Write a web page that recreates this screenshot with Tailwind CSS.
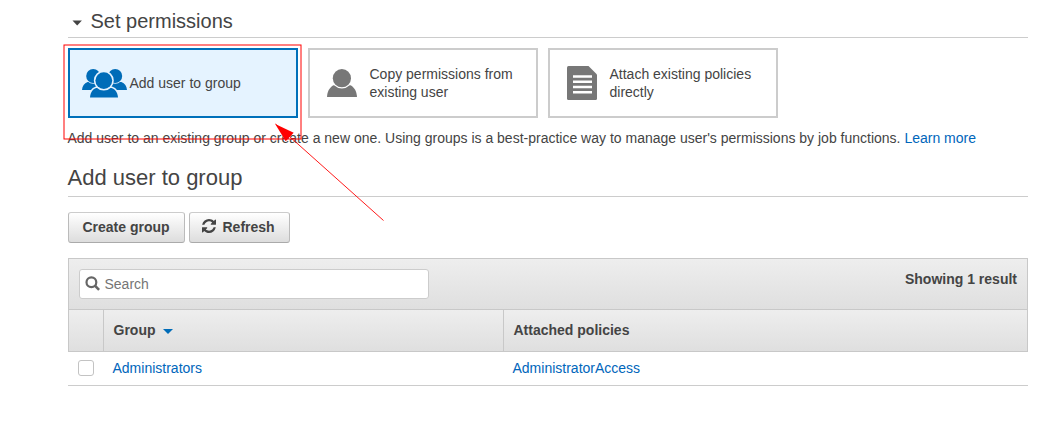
<!DOCTYPE html>
<html lang="en">
<head>
<meta charset="utf-8">
<title>Set permissions</title>
<script src="https://cdn.jsdelivr.net/npm/@tailwindcss/browser@4"></script>
</head>
<body class="bg-white text-[#444] text-[14px] leading-[18px] font-['Liberation_Sans',Arial,sans-serif]">
<main class="relative w-[1061px] h-[437px] overflow-hidden pl-[68px] pr-[33px]">
  <h1 class="flex items-center h-[38px] pt-[5px] pl-1 border-b border-[#ccc] text-[20px] leading-[24px]">
    <svg class="w-[11px] h-[6px] mr-[7.5px] mt-[3px]" viewBox="0 0 11 6" fill="#444"><path d="M.5 .5h9.400L5.200 5.500z"/></svg>
    <span>Set permissions</span>
  </h1>
  <div class="flex gap-[10px] mt-[10px]">
    <div class="flex items-center w-[230px] h-[70px] border-2 border-[#0070ba] bg-[#e5f3ff] pl-3">
      <svg class="w-[45px] h-[29px] mr-[2.500px]" viewBox="0 0 45 29" fill="#006cb8">
        <path d="M0 21c.3-4 2.200-6.800 5.600-8h11v8zM45 21c-.3-4-2.200-6.800-5.600-8h-11v8z"/>
        <circle cx="11.200" cy="7" r="7" stroke="#e5f3ff" stroke-width="1.400" paint-order="stroke"/>
        <circle cx="33.200" cy="7" r="7" stroke="#e5f3ff" stroke-width="1.400" paint-order="stroke"/>
        <path d="M8 28.500c.3-4.800 2.400-8.300 6.300-9.600h15.200c3.900 1.300 6.200 4.800 6.500 9.600z" stroke="#e5f3ff" stroke-width="3" paint-order="stroke"/>
        <circle cx="21.800" cy="11.600" r="8.400" stroke="#e5f3ff" stroke-width="3.200" paint-order="stroke"/>
      </svg>
      <span>Add user to group</span>
    </div>
    <div class="flex items-center w-[230px] h-[70px] border-2 border-[#ccc] pl-[17px]">
      <svg class="w-[30px] h-[28px] mr-[12.500px]" viewBox="0 0 30 28" fill="#777">
        <path d="M0 28c.3-5.800 2.600-9.700 6.500-11.800h17c3.900 2.100 6.200 6 6.500 11.800z"/>
        <circle cx="14.900" cy="9.200" r="9.100" stroke="#fff" stroke-width="2.600" paint-order="stroke"/>
      </svg>
      <span>Copy permissions from<br>existing user</span>
    </div>
    <div class="flex items-center w-[230px] h-[70px] border-2 border-[#ccc] pl-[17px]">
      <svg class="w-[30px] h-[34px] mr-[12.500px]" viewBox="0 0 30 34">
        <path d="M1.500 0H21.500L30 8.500V32.500Q30 34 28.500 34H1.500Q0 34 0 32.500V1.500Q0 0 1.500 0z" fill="#777"/>
        <path d="M6 10.500h19M6 15.700h19M6 21h19M6 26.200h19" stroke="#fff" stroke-width="2.500"/>
      </svg>
      <span>Attach existing policies<br>directly</span>
    </div>
  </div>
  <p class="mt-[11px] -ml-[.5px] whitespace-nowrap">Add user to an existing group or create a new one. Using groups is a best-practice way to manage user's permissions by job functions. <a class="text-[#0066bb]">Learn more</a></p>
  <h2 class="mt-[17px] h-[33px] pt-px border-b border-[#ccc] text-[22px] leading-[26px] indent-[-.5px]">Add user to group</h2>
  <div class="flex gap-1 mt-[15px] font-bold">
    <button class="flex items-center justify-center w-[117px] h-[31px] pb-[2px] pr-px rounded-[3px] border border-[#bbb] border-t-[#ccc] border-b-[#aaa] bg-linear-to-b from-white to-[#ddd]">Create group</button>
    <button class="flex items-center w-[101px] h-[31px] pb-[2px] pl-[12px] rounded-[3px] border border-[#bbb] border-t-[#ccc] border-b-[#aaa] bg-linear-to-b from-white to-[#ddd]">
      <svg class="w-[14px] h-[14px] mr-[6.500px] -mt-[2px]" viewBox="0 0 1536 1536" fill="#444"><path d="M1511 928q0 5-1 7-64 268-268 434.500T764 1536q-146 0-282.500-55T238 1324l-129 129q-19 19-45 19t-45-19-19-45V960q0-26 19-45t45-19h448q26 0 45 19t19 45-19 45l-137 137q71 66 161 102t187 36q134 0 250-65t186-179q11-17 53-117 8-23 30-23h192q13 0 22.500 9.500t9.500 22.500zm25-800v448q0 26-19 45t-45 19h-448q-26 0-45-19t-19-45 19-45l138-138Q969 256 768 256q-134 0-250 65T332 500q-11 17-53 117-8 23-30 23H50q-13 0-22.500-9.500T18 608v-7q65-268 270-434.500T768 0q146 0 284 55.500T1297 212l130-129q19-19 45-19t45 19 19 45z"/></svg>
      Refresh
    </button>
  </div>
  <section class="mt-[15px]">
    <div class="flex justify-between h-[51px] px-[10px] pt-[10px] border border-b-0 border-[#c8c8c8] bg-linear-to-b from-[#eee] to-[#dfdfdf]">
      <div class="flex items-center w-[350px] h-[30px] pl-[5px] rounded-[3px] border border-[#ccc] bg-white text-[#757575]">
        <svg class="w-[15px] h-[15px] mr-[4.500px] -mt-[2px]" viewBox="0 0 15 15" fill="none" stroke="#666" stroke-width="2.200"><circle cx="6.400" cy="6.200" r="4.900"/><path d="M9.900 9.700l4.200 4.200" stroke-width="2.600"/></svg>
        Search
      </div>
      <div class="pt-px font-bold">Showing 1 result</div>
    </div>
    <div class="flex h-[43px] border border-[#c8c8c8] bg-linear-to-b from-[#eee] to-[#dfdfdf] font-bold">
      <div class="w-[35px] border-r border-[#c8c8c8]"></div>
      <div class="flex items-center w-[400px] pb-[2px] pl-[9.500px] border-r border-[#c8c8c8]">Group
        <svg class="w-[10px] h-[5px] ml-[7.500px] mt-[3px]" viewBox="0 0 10 5" fill="#006cb8"><path d="M0 0h10L5 5z"/></svg>
      </div>
      <div class="flex items-center pb-[2px] pl-[9.500px]">Attached policies</div>
    </div>
    <div class="flex items-center h-[34px] pb-[2px] pl-[10px] border-b border-[#ccc] text-[#0066bb]">
      <div class="w-[16px] h-[16px] rounded-[3px] border border-[#c3c3c3] bg-white mr-[18.500px]"></div>
      <div class="w-[400px]">Administrators</div>
      <div>AdministratorAccess</div>
    </div>
  </section>
  <svg class="absolute inset-0 w-[1061px] h-[437px]" viewBox="0 0 1061 437" fill="none" stroke="#f00">
    <rect x="64" y="45" width="237" height="94"/>
    <path d="M275.500 124L383.500 220.500" stroke-width=".9"/>
    <path d="M275.200 124L293.700 132.700 285.700 141.300z" fill="#f00" stroke="none"/>
  </svg>
</main>
</body>
</html>
